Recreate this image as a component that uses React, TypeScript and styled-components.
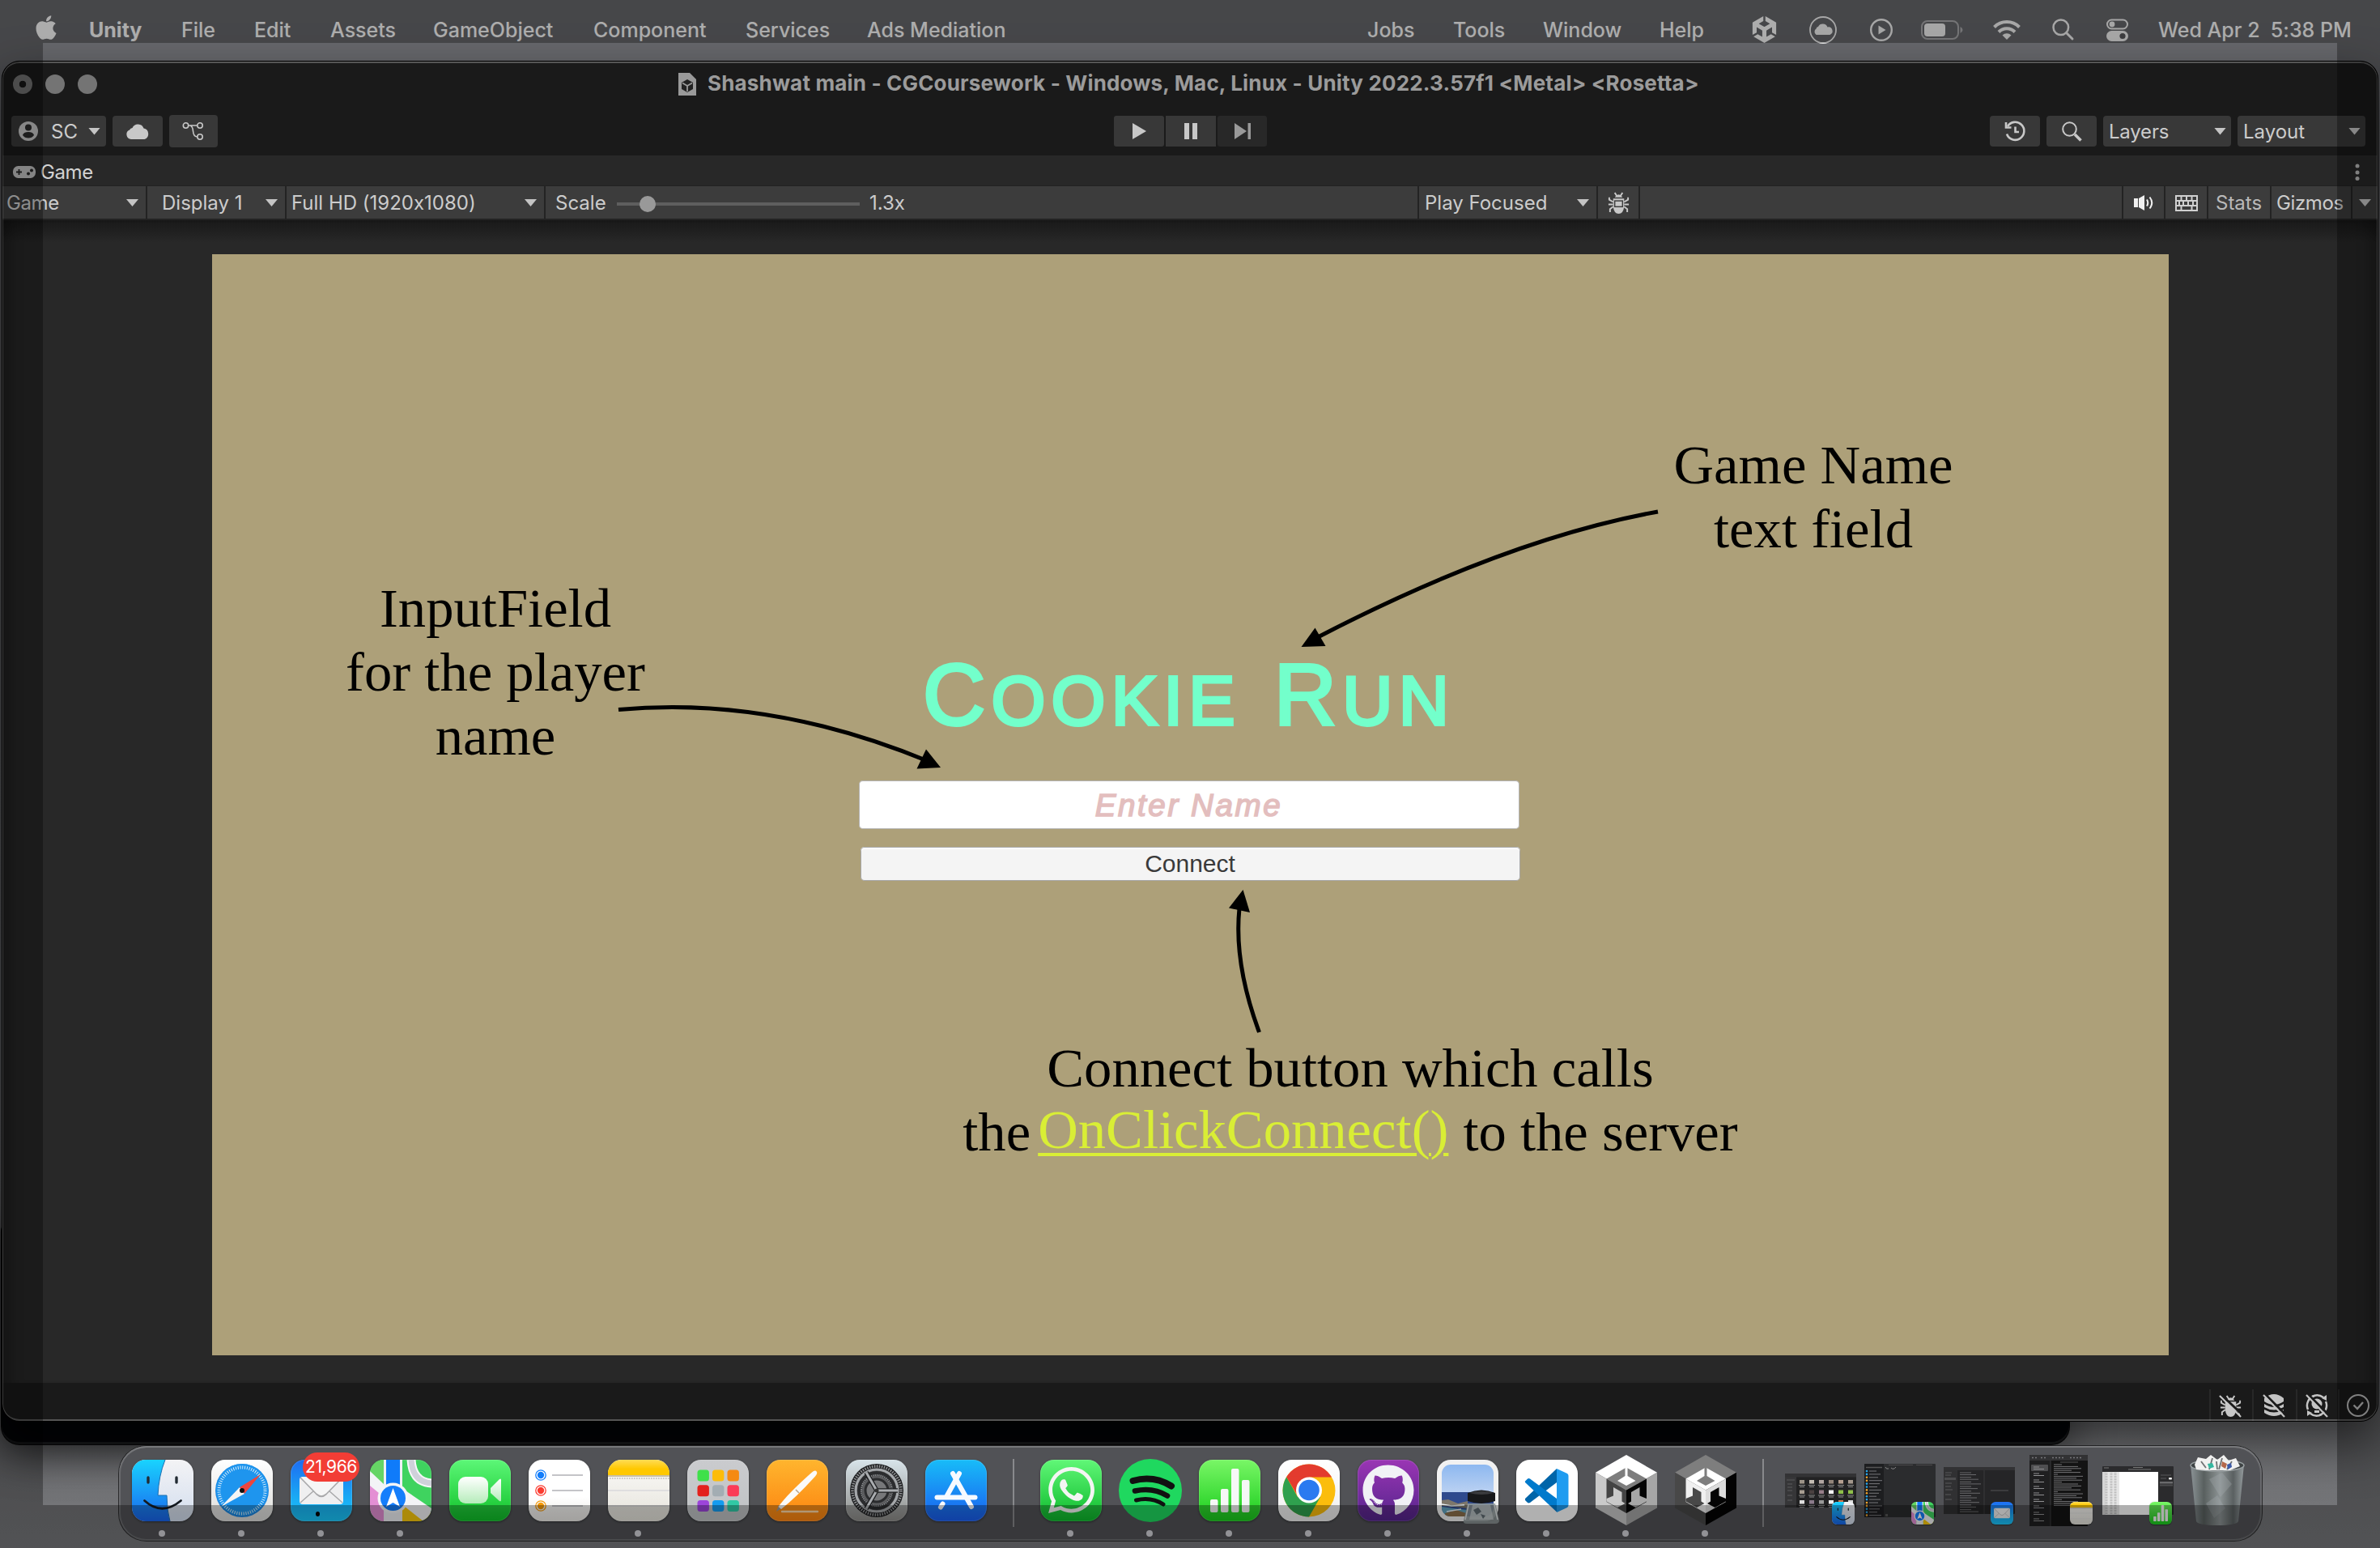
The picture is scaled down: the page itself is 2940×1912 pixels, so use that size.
import React from "react";
import styled, { createGlobalStyle, css } from "styled-components";
import { FaApple, FaGithub, FaWhatsapp } from "react-icons/fa";
import { SiUnity } from "react-icons/si";

const GlobalStyle = createGlobalStyle`
  * { box-sizing: border-box; }
  body { margin: 0; background: #737478; }
  svg { display: block; flex: none; overflow: visible; }
`;

/* ---------- desktop ---------- */

const Desktop = styled.main`
  position: relative;
  width: 2940px;
  height: 1912px;
  overflow: hidden;
  display: flex;
  flex-direction: column;
  background: linear-gradient(#66676b 0 75px, #6a6b6e 1700px, #77787b 1912px);
  font-family: Inter, "Liberation Sans", sans-serif;
  font-feature-settings: "calt" 0;
`;

const DimFrame = styled.div`
  position: absolute;
  left: 53px;
  top: 53px;
  width: 2834px;
  height: 1806px;
  box-shadow: 0 0 0 200px rgba(0, 0, 0, 0.31);
  pointer-events: none;
  z-index: 5;
`;

/* ---------- menu bar ---------- */

const MenuBar = styled.nav`
  height: 75px;
  flex: none;
  display: flex;
  align-items: flex-start;
  color: #fbfbfb;
`;

const MenuItem = styled.span<{ $ml: number; $w: number; $bold?: boolean; $ls?: number }>`
  margin-left: ${(p) => p.$ml}px;
  width: ${(p) => p.$w}px;
  height: 73px;
  flex: none;
  display: flex;
  align-items: center;
  white-space: pre;
  font-size: 25px;
  font-weight: ${(p) => (p.$bold ? 700 : 500)};
  letter-spacing: ${(p) => p.$ls ?? 0}px;
`;

/* ---------- windows ---------- */

const BackWindow = styled.div`
  position: absolute;
  left: 2px;
  top: 1500px;
  width: 2554px;
  height: 284px;
  border-radius: 22px;
  background: #030407;
  box-shadow: inset 0 -3px 0 #17181a, 0 0 0 1px #060606, 0 12px 50px rgba(0, 0, 0, 0.5);
`;

const Window = styled.section`
  position: relative;
  margin: 0 2px;
  height: 1681px;
  flex: none;
  display: flex;
  flex-direction: column;
  border-radius: 22px;
  overflow: hidden;
  border: 1px solid #000;
  background: #1a1a1a;
  box-shadow: 0 26px 60px rgba(0, 0, 0, 0.55);
  &::after {
    content: "";
    position: absolute;
    inset: 0;
    border-radius: 21px;
    border: 2px solid rgba(255, 255, 255, 0.26);
    border-left-width: 1px;
    border-right-width: 1px;
  }
`;

const TitleBar = styled.header`
  height: 56px;
  flex: none;
  display: flex;
  align-items: center;
  padding-left: 13px;
`;

const Light = styled.i<{ $dot?: boolean }>`
  width: 24px;
  height: 24px;
  margin-right: 16px;
  border-radius: 50%;
  background: ${(p) =>
    p.$dot ? "radial-gradient(circle, #161616 0 4px, #6f6f6f 4.6px)" : "#747474"};
`;

const WindowTitle = styled.h1`
  margin: 0 0 3px 13px;
  width: 1250px;
  font-size: 26px;
  font-weight: 700;
  color: #9b9b9b;
  white-space: nowrap;
  letter-spacing: 0.17px;
`;

const MainBar = styled.div`
  height: 60px;
  flex: none;
  display: flex;
  align-items: center;
  padding: 0 15px 0 11px;
`;

const BarButton = styled.button<{ $w: number; $ml?: number; $h?: number; $off?: boolean; $first?: boolean; $r?: number }>`
  margin: 0 0 0 ${(p) => p.$ml ?? 0}px;
  width: ${(p) => p.$w}px;
  height: ${(p) => p.$h ?? 38}px;
  flex: none;
  display: flex;
  align-items: center;
  justify-content: center;
  padding: 0;
  border: 0;
  border-radius: ${(p) => p.$r ?? 4}px;
  background: ${(p) => (p.$off ? "#282828" : "#383838")};
  color: #c8c8c8;
  font: 400 24px Inter, sans-serif;
  text-align: left;
  ${(p) =>
    p.$first &&
    css`
      justify-content: flex-start;
      padding: 0 7px;
    `}
`;

const Label = styled.span<{ $w?: number; $ls?: number; $color?: string }>`
  width: ${(p) => (p.$w ? `${p.$w}px` : "auto")};
  flex: none;
  white-space: nowrap;
  font-size: 24px;
  letter-spacing: ${(p) => p.$ls ?? 0}px;
  color: ${(p) => p.$color ?? "#cccccc"};
`;

const Caret = styled.i`
  width: 15px;
  height: 9px;
  flex: none;
  background: #c4c4c4;
  clip-path: polygon(0 0, 100% 0, 50% 100%);
`;

const Spacer = styled.div`
  flex: 1;
`;

const TabBar = styled.div`
  height: 38px;
  flex: none;
  display: flex;
  align-items: center;
  padding: 4px 22px 0 13px;
  background: #282828;
  border-bottom: 1px solid #222;
`;

const GameBar = styled.div`
  height: 42px;
  flex: none;
  display: flex;
  background: #3c3c3c;
  border-bottom: 2px solid #232323;
`;

const Cell = styled.div<{ $w: number; $pl?: number; $pr?: number; $center?: boolean; $open?: boolean }>`
  width: ${(p) => p.$w}px;
  height: 100%;
  flex: none;
  display: flex;
  align-items: center;
  justify-content: ${(p) => (p.$center ? "center" : "space-between")};
  padding: 1px ${(p) => p.$pr ?? 0}px 0 ${(p) => p.$pl ?? 0}px;
  border-right: ${(p) => (p.$open ? "0" : "2px solid #232323")};
`;

const Slider = styled.div`
  width: 300px;
  height: 4px;
  margin: 2px 12px 0 13px;
  background: #5e5e5e;
  display: flex;
  align-items: center;
  padding-left: 28px;
`;

const Knob = styled.i`
  width: 20px;
  height: 20px;
  border-radius: 50%;
  background: #999;
`;

const Stage = styled.div`
  height: 1436px;
  flex: none;
  padding: 42px 0 0 259px;
  background: linear-gradient(#191919, #282828 28px);
  box-shadow: inset 24px 0 16px -14px rgba(0, 0, 0, 0.25), inset -24px 0 16px -14px rgba(0, 0, 0, 0.25);
`;

const StatusBar = styled.footer`
  flex: 1;
  display: flex;
  justify-content: flex-end;
  background: #1a1a1a;
`;

const StatusCell = styled.div<{ $w: number }>`
  width: ${(p) => p.$w}px;
  display: flex;
  align-items: center;
  justify-content: center;
  padding-top: 9px;
  background: linear-gradient(#282828, #282828) left 8px / 2px 100% no-repeat;
  background-position: left 0 top 8px;
  color: #c4c4c4;
`;

/* ---------- game view ---------- */

const GameView = styled.div`
  position: relative;
  width: 2417px;
  height: 1360px;
  background: #ada079;
  display: flex;
  flex-direction: column;
  align-items: center;
  padding-top: 482px;
`;

const GameTitle = styled.h2`
  margin: 0 4px 0 0;
  height: 168px;
  line-height: 128px;
  font-family: "Liberation Sans", Arial, sans-serif;
  font-weight: 400;
  font-size: 107px;
  letter-spacing: 7.2px;
  word-spacing: 4px;
  color: #73ffcb;
  -webkit-text-stroke: 3.8px #73ffcb;
  white-space: pre;
  transform: translateY(-2px);
  small {
    font-size: 86px;
  }
`;

const NameInput = styled.div`
  width: 816px;
  height: 60px;
  margin-right: 4px;
  flex: none;
  display: flex;
  align-items: center;
  justify-content: center;
  padding-top: 1px;
  border-radius: 5px;
  background: #fff;
  box-shadow: inset 0 0 0 1px rgba(90, 90, 90, 0.45);
  font: italic 400 38.5px "Liberation Sans", Arial, sans-serif;
  letter-spacing: 2.6px;
  color: #e3bebe;
  -webkit-text-stroke: 1.6px #e3bebe;
`;

const ConnectButton = styled.button`
  width: 815px;
  height: 42px;
  margin: 22px 1px 0 0;
  padding: 0;
  flex: none;
  border: 0;
  border-radius: 5px;
  background: #f4f4f4;
  box-shadow: inset 0 0 0 1px rgba(90, 90, 90, 0.5), inset 0 3px 0 #fff;
  font: 400 30px "Liberation Sans", Arial, sans-serif;
  color: #3a3a3a;
`;

const Note = styled.div<{ $x: number; $y: number; $w: number }>`
  position: absolute;
  left: ${(p) => p.$x}px;
  top: ${(p) => p.$y}px;
  width: ${(p) => p.$w}px;
  text-align: center;
  white-space: pre;
  font: 400 68.67px/79.2px "Liberation Serif", "Times New Roman", serif;
  color: #000;
`;

const NoteLine = styled.div`
  display: flex;
  justify-content: center;
`;

const Call = styled.u`
  margin: -3px 18px 0 9px;
  color: #d9ee35;
  text-decoration-thickness: 4px;
  text-underline-offset: 6px;
`;

const Arrows = styled.svg`
  position: absolute;
  left: -262px;
  top: -314px;
  pointer-events: none;
`;

/* ---------- dock ---------- */

const DockBar = styled.div`
  position: relative;
  align-self: center;
  margin: 30px 0 0 1px;
  width: 2647px;
  height: 117px;
  flex: none;
  display: flex;
  padding: 0 5px;
  border-radius: 34px;
  background: #515256;
  box-shadow: inset 0 2px 0 #77787b, inset 0 0 0 2px rgba(255, 255, 255, 0.14), 0 0 0 1px rgba(20, 20, 22, 0.75);
`;

const Slot = styled.div<{ $running?: boolean }>`
  position: relative;
  width: 98px;
  height: 117px;
  flex: none;
  display: flex;
  justify-content: center;
  padding-top: 17px;
  ${(p) =>
    p.$running &&
    css`
      &::after {
        content: "";
        position: absolute;
        left: 44px;
        top: 104px;
        width: 8px;
        height: 8px;
        border-radius: 50%;
        background: #d4d4da;
      }
    `}
`;

const Tile = styled.div<{ $bg: string }>`
  width: 76px;
  height: 76px;
  border-radius: 17px;
  overflow: hidden;
  background: ${(p) => p.$bg};
  box-shadow: 0 1px 3px rgba(0, 0, 0, 0.4), inset 0 0 0 1px rgba(255, 255, 255, 0.12);
`;

const Mini = styled.div`
  position: absolute;
  right: 7px;
  top: 69px;
  width: 28px;
  height: 28px;
  > div {
    transform: scale(0.3684);
    transform-origin: 0 0;
  }
`;

const Badge = styled.span`
  position: absolute;
  left: 26px;
  top: 8px;
  width: 70px;
  height: 36px;
  border-radius: 18px;
  background: #f23d35;
  color: #fff;
  font: 400 21px/36px Inter, sans-serif;
  letter-spacing: -0.4px;
  text-align: center;
`;

const Divider = styled.div`
  width: 2px;
  height: 84px;
  margin: 16px 21px 0;
  flex: none;
  background: #88898c;
`;

/* ---------- dock icons ---------- */

const Art = ({ children, w = 76, h = 76 }: { children: React.ReactNode; w?: number; h?: number }) => (
  <svg width={w} height={h} viewBox={`0 0 ${w} ${h}`}>
    {children}
  </svg>
);

const Finder = () => (
  <Tile $bg="linear-gradient(#f3f3f5, #d3deef)">
    <Art>
      <defs>
        <linearGradient id="fin" x1="0" y1="0" x2="0" y2="1">
          <stop offset="0" stopColor="#19d3fe" />
          <stop offset="1" stopColor="#1a66ee" />
        </linearGradient>
      </defs>
      <path d="M0 0H41Q33 20 32 44H43Q43 62 47 76H0Z" fill="url(#fin)" />
      <path d="M41 0Q33 20 32 44H43Q43 62 47 76" fill="none" stroke="#1b6fb0" strokeWidth="1" />
      <path d="M20 22v6M55 22v6" stroke="#222b33" strokeWidth="3.4" strokeLinecap="round" />
      <path d="M15.500 50.500Q37 70 60.500 50.500" fill="none" stroke="#151b22" strokeWidth="2.800" strokeLinecap="round" />
    </Art>
  </Tile>
);

const Safari = () => (
  <Tile $bg="linear-gradient(#fff, #dcdcda)">
    <Art>
      <circle cx="38" cy="38" r="33" fill="#1c86e0" />
      <circle cx="38" cy="37" r="32" fill="#1e95ee" />
      <circle cx="38" cy="38" r="28.500" fill="none" stroke="#d9eefb" strokeWidth="4" strokeDasharray="1 1.800" />
      <path d="M12 58L35 34L41 42Z" fill="#f4f4f4" />
      <path d="M61 18L35 34L41 42Z" fill="#ee453d" />
      <circle cx="38" cy="38" r="3" fill="#111" />
    </Art>
  </Tile>
);

const Mail = () => (
  <Tile $bg="linear-gradient(#1d6cf2, #1aa9f4 60%, #1ac8fc)">
    <Art>
      <rect x="11" y="21" width="54" height="34" rx="4" fill="#efeff0" />
      <path d="M12 53L29 38M64 53L47 38" stroke="#a9a9ab" strokeWidth="1.500" />
      <path d="M12 22L32 42.500Q38 48 44 42.500L64 22" fill="#f6f6f6" stroke="#a9a9ab" strokeWidth="1.700" />
    </Art>
  </Tile>
);

const MailPoint = styled.i`
  position: absolute;
  left: 42px;
  top: 81px;
  width: 5px;
  height: 6px;
  border-radius: 50%;
  background: #050505;
`;

const Maps = () => (
  <Tile $bg="#3fd35f">
    <Art>
      <path d="M0 0H17V30L0 20Z" fill="#66d565" />
      <path d="M0 14L17 30V60H0Z" fill="#f3f3f6" />
      <path d="M0 32L17 46V76H0Z" fill="#e48fd4" />
      <path d="M40 76V44L76 66V76Z" fill="#f9c80e" />
      <path d="M38 34L76 60V76H66L38 54Z" fill="#f3f3f6" />
      <path d="M17 0H40V76H17Z" fill="#eef0f4" />
      <path d="M20 0H37V44H20Z" fill="#0f7bfa" />
      <path d="M51 0C52 18 60 28 76 29" fill="none" stroke="#f6f6f8" strokeWidth="11" />
      <path d="M51 0C52 18 60 28 76 29" fill="none" stroke="#cfd1da" strokeWidth="7" />
      <circle cx="28.500" cy="47.500" r="19" fill="#f4f5f8" />
      <circle cx="28.500" cy="47.500" r="15.500" fill="#157efb" />
      <path d="M28.500 35L37 58L28.500 53L20 58Z" fill="#fff" />
    </Art>
  </Tile>
);

const FaceTime = () => (
  <Tile $bg="linear-gradient(#5cf777, #0fbf28)">
    <Art>
      <defs>
        <linearGradient id="ft" x1="0" y1="0" x2="0" y2="1">
          <stop offset="0" stopColor="#fff" />
          <stop offset="1" stopColor="#b5ecba" />
        </linearGradient>
      </defs>
      <rect x="11" y="21" width="37" height="33" rx="9" fill="url(#ft)" />
      <path d="M51 35L62 24Q64 22.500 64 25V50Q64 52 62 51L51 41Z" fill="url(#ft)" />
    </Art>
  </Tile>
);

const Reminders = () => (
  <Tile $bg="linear-gradient(#fff, #fff 60%, #eceae6)">
    <Art>
      {["#147efb", "#fb3b30", "#f59a0b"].map((c, i) => (
        <g key={c}>
          <circle cx="15" cy={19 + i * 19} r="6.200" fill="none" stroke={c} strokeWidth="1.300" />
          <circle cx="15" cy={19 + i * 19} r="4.200" fill={c} />
          <path d={`M29 ${19 + i * 19}H67`} stroke="#c4c4c8" strokeWidth="1.800" />
        </g>
      ))}
    </Art>
  </Tile>
);

const Notes = () => (
  <Tile $bg="linear-gradient(#fbfaf8, #e6e4dc)">
    <Art>
      <defs>
        <linearGradient id="nt" x1="0" y1="0" x2="0" y2="1">
          <stop offset="0" stopColor="#ffdc55" />
          <stop offset="0.600" stopColor="#ffc800" />
        </linearGradient>
      </defs>
      <rect width="76" height="19" fill="url(#nt)" />
      <path d="M0 20H76" stroke="#b9ae8c" strokeWidth="1.500" />
      <path d="M2 23H76" stroke="#c9c8c4" strokeWidth="1.800" strokeDasharray="1.600 1.400" />
      <path d="M0 38H76M0 57H76" stroke="#d9d9dc" strokeWidth="1.600" />
    </Art>
  </Tile>
);

const padColours = ["#3fe04a", "#fcbc0b", "#f58a12", "#e3211d", "#a3adb3", "#fb3b57", "#9c45da", "#139cf0", "#31c9a5"];

const Launchpad = () => (
  <Tile $bg="linear-gradient(#cacbce, #bfc2c4)">
    <Art>
      {padColours.map((c, i) => (
        <rect key={c} x={12.500 + (i % 3) * 18.500} y={12.500 + Math.floor(i / 3) * 18.700} width="14.400" height="14" rx="3.500" fill={c} />
      ))}
    </Art>
  </Tile>
);

const Pages = () => (
  <Tile $bg="linear-gradient(#ffb52e, #fc8410)">
    <Art>
      <path d="M19 64H63" stroke="#ffd9a8" strokeWidth="2.400" strokeLinecap="round" />
      <path d="M12 64L15 56L18.500 60Z" fill="#9a9a9a" />
      <path d="M14.500 58Q26 42 56 15.500Q60 12 62 15Q63 17 60 20.500Q36 47 18 61Z" fill="#fbfaf8" />
      <path d="M36 37L40 41" stroke="#b9a58d" strokeWidth="1.600" />
    </Art>
  </Tile>
);

const Settings = () => (
  <Tile $bg="linear-gradient(#d8e4ea, #8d8c89)">
    <Art>
      <circle cx="38" cy="38" r="33" fill="#1d1e20" />
      <circle cx="38" cy="38" r="30" fill="none" stroke="#8f9193" strokeWidth="3.500" strokeDasharray="1.500 1.500" />
      <circle cx="38" cy="38" r="26" fill="#5c5d5f" stroke="#a4a7aa" strokeWidth="3.200" />
      <circle cx="38" cy="38" r="21" fill="none" stroke="#2b2c2e" strokeWidth="6" />
      <circle cx="38" cy="38" r="19" fill="none" stroke="#8b8d90" strokeWidth="2" strokeDasharray="1.400 1" />
      <circle cx="38" cy="38" r="14" fill="#77787a" stroke="#2b2c2e" strokeWidth="3" />
      <path d="M38 38H64M38 38L25 15.500M38 38L25 60.500" stroke="#1f2022" strokeWidth="5.500" />
      <path d="M38 38H64M38 38L25 15.500M38 38L25 60.500" stroke="#a9acaf" strokeWidth="3" />
      <circle cx="38" cy="38" r="2.500" fill="#333" />
    </Art>
  </Tile>
);

const AppStore = () => (
  <Tile $bg="linear-gradient(#18bcf8, #1a5df0)">
    <Art>
      <g stroke="#f7faff" strokeWidth="6" strokeLinecap="round">
        <path d="M14.500 46.500H61.500" />
        <path d="M42 17L27 44M21.500 54.500L19 58.500" />
        <path d="M34 17L57 58" />
      </g>
    </Art>
  </Tile>
);

const WhatsApp = () => (
  <Tile $bg="linear-gradient(#60f777, #0cb92b)">
    <Art>
      <g transform="translate(6 5)">
        <FaWhatsapp size={65} color="#f3f5f3" />
      </g>
    </Art>
  </Tile>
);

const Spotify = () => (
  <Art>
    <circle cx="38" cy="38" r="39" fill="#1fd85f" />
    <g fill="none" stroke="#111" strokeLinecap="round">
      <path d="M16.500 26Q42 19 64 32.500" strokeWidth="8" />
      <path d="M19 38.500Q41 33.500 59 44.500" strokeWidth="6.600" />
      <path d="M20.500 50Q39 45.500 54 55" strokeWidth="5" />
    </g>
  </Art>
);

const Numbers = () => (
  <Tile $bg="linear-gradient(#79f666, #19cc1c)">
    <Art>
      <g fill="#f6f8f7">
        <rect x="14" y="49" width="9.500" height="16" rx="2" />
        <rect x="27" y="36" width="9.500" height="29" rx="2" />
        <rect x="40" y="11" width="9.500" height="54" rx="2" />
        <rect x="53" y="25" width="9.500" height="40" rx="2" />
      </g>
    </Art>
  </Tile>
);

const Chrome = () => (
  <Tile $bg="linear-gradient(#fff, #efefef)">
    <Art>
      <circle cx="38" cy="38" r="32.500" fill="#fbbd0c" />
      <path d="M10.200 21.200A32.500 32.500 0 0 0 38 70.500L52 46L38 38L24 46Z" fill="#2fa04e" />
      <path d="M38 38L10.200 21.200A32.500 32.500 0 0 1 66 21.500H38Z" fill="#e33b2e" />
      <path d="M10.200 21.200L23.700 44L38 30V20Z" fill="#e33b2e" />
      <circle cx="38" cy="37.500" r="16" fill="#fff" />
      <circle cx="38" cy="37.500" r="12.800" fill="#2a7af0" />
    </Art>
  </Tile>
);

const GitHub = () => (
  <Tile $bg="linear-gradient(#9a35b4, #55258c)">
    <Art>
      <g transform="translate(5.500 5.500)">
        <FaGithub size={65} color="#f1f1f6" />
      </g>
    </Art>
  </Tile>
);

const PreviewTile = styled(Tile)`
  overflow: visible;
`;

const Preview = () => (
  <PreviewTile $bg="#f1f1f1">
    <Art>
      <defs>
        <clipPath id="pv">
          <rect x="6" y="6" width="64" height="64" rx="11" />
        </clipPath>
        <linearGradient id="sky" x1="0" y1="0" x2="0" y2="1">
          <stop offset="0" stopColor="#8db8f0" />
          <stop offset="1" stopColor="#bcd2f2" />
        </linearGradient>
      </defs>
      <g clipPath="url(#pv)">
        <rect x="6" y="6" width="64" height="36" fill="url(#sky)" />
        <rect x="6" y="40" width="64" height="30" fill="#2f4a8d" />
        <path d="M6 50L14 49L26 54L38 51V60L22 58L6 57Z" fill="#7d776b" />
        <path d="M6 58L20 60L38 62V70H6Z" fill="#62a3bd" />
        <path d="M10 66L24 62L36 66V70H10Z" fill="#8c6f4b" />
        <path d="M6 55L18 57L34 56M12 64L30 61" stroke="#e9f0f3" strokeWidth="1.500" fill="none" />
      </g>
      <path d="M38 54H72L77 75Q77 79 72 79H37Q32 79 33 75Z" fill="#8f989a" opacity="0.880" />
      <path d="M44 56L40 74H70L66 56Z" fill="#c9d0d2" opacity="0.700" />
      <path d="M39 56L35 74M71 56L75 74" stroke="#dfe4e5" strokeWidth="1.500" />
      <path d="M45 62l6 -3l4 5l-6 4zM54 67l6 2l-3 4z" fill="#5f6b72" />
      <path d="M38 41Q55 34 72 41V51Q55 57 38 51Z" fill="#17181a" />
      <path d="M40 41Q55 36.500 70 41Q55 45 40 41Z" fill="#3a3b3e" />
    </Art>
  </PreviewTile>
);

const VSCode = () => (
  <Tile $bg="#fff">
    <Art>
      <path d="M11 48L50 11V28L17 53Q15 54 13.500 52.500L11 50Z" fill="#0065a9" />
      <path d="M11 28L50 64.500V48L17 23.500Q15 22.500 13.500 24L11 26.500Z" fill="#007acc" />
      <path d="M50 11L63 17Q64.500 18 64.500 20V56Q64.500 58 63 59L50 65Z" fill="#1f9cf0" />
    </Art>
  </Tile>
);

interface CubeTone {
  top: string;
  left: string;
  right: string;
  inTop: string;
  inLeft: string;
  inRight: string;
  cut: string;
  cutLeft: string;
  cutRight: string;
}

const TallArt = styled.svg`
  margin-top: -6px;
`;

const Cube = ({ t }: { t: CubeTone }) => (
  <TallArt width="76" height="87" viewBox="0 0 76 87">
    <path d="M38 0L76 21.700L38 43.500L0 21.700Z" fill={t.top} />
    <path d="M0 21.700L38 43.500V87L0 65.500Z" fill={t.left} />
    <path d="M76 21.700L38 43.500V87L76 65.500Z" fill={t.right} />
    <path d="M38 15.500L63 29.500L38 43.500L13.500 29.500Z" fill={t.inTop} />
    <path d="M13.500 29.500L38 43.500V72L13.500 58Z" fill={t.inLeft} />
    <path d="M63 29.500L38 43.500V72L63 58Z" fill={t.inRight} />
    <path d="M36.500 13H39.500V26L49.500 32L38 38L27 32L36.500 26Z" fill={t.cut} />
    <path d="M22 40L32.500 46V57.500L36.500 60L27 65L13.500 57.500V54L22 50.500Z" fill={t.cutLeft} />
    <path d="M54.500 40L44 46V57.500L40 60L49.500 65L63 57.500V54L54.500 50.500Z" fill={t.cutRight} />
  </TallArt>
);

const lightCube: CubeTone = {
  top: "#ffffff", left: "#c9c9c9", right: "#a6a6a6",
  inTop: "#7d7d7d", inLeft: "#444444", inRight: "#050505",
  cut: "#ffffff", cutLeft: "#c9c9c9", cutRight: "#a6a6a6",
};
const darkCube: CubeTone = {
  top: "#7e7e7e", left: "#484848", right: "#030303",
  inTop: "#ffffff", inLeft: "#f0f0f0", inRight: "#dcdcdc",
  cut: "#7e7e7e", cutLeft: "#484848", cutRight: "#050505",
};

const Trash = () => (
  <TallArt width="68" height="88" viewBox="0 0 68 88">
    <defs>
      <linearGradient id="bin" x1="0" y1="0" x2="1" y2="0">
        <stop offset="0" stopColor="#8b9396" />
        <stop offset="0.250" stopColor="#59605f" />
        <stop offset="0.550" stopColor="#8d9495" />
        <stop offset="0.800" stopColor="#5a6061" />
        <stop offset="1" stopColor="#949b9d" />
      </linearGradient>
    </defs>
    <path d="M1 12Q34 24 67 12L60 82Q58 87 34 87Q10 87 8 82Z" fill="url(#bin)" />
    <path d="M24 30L40 22L52 36L38 52Z M20 60L34 50L44 66L30 78Z" fill="#aab1b3" opacity="0.300" />
    <ellipse cx="34" cy="13" rx="33" ry="7" fill="#3e4344" stroke="#9aa1a3" strokeWidth="1.500" />
    <path d="M6 12L10 3L20 5L26 0L34 6L42 0L48 7L57 4L62 14L50 19H20L8 18Z" fill="#f1f1f0" />
    <path d="M14 8L20 16M28 4L24 18M33 8L34 18M40 4L36 18M52 8L46 18" stroke="#6f7274" strokeWidth="1.800" />
    <path d="M22 11l6 -1l2 5l-6 2z" fill="#35b7a0" />
    <path d="M40 8l6 3l-2 6l-5 -3z" fill="#b4674a" />
    <path d="M46 12l5 -2l1 5l-5 3z" fill="#3c5aa6" />
  </TallArt>
);

/* Minimised window previews */
const range = (n: number) => Array.from({ length: n }, (_, i) => i);

const Thumb = styled.div<{ $w: number; $h: number; $top: number; $bg?: string }>`
  width: ${(p) => p.$w}px;
  height: ${(p) => p.$h}px;
  margin-top: ${(p) => p.$top - 17}px;
  background: ${(p) => p.$bg ?? "#29292b"};
  border-radius: 1px;
  overflow: hidden;
`;

const FinderThumb = () => (
  <Thumb $w={88} $h={42} $top={34} $bg="#222223">
    <Art w={88} h={42}>
      <rect width="14" height="42" fill="#363638" />
      <rect width="88" height="4.500" fill="#333335" />
      <path d="M2 8H12M3 13H9M3 17H9M3 21H9M3 27H9M3 33H9" stroke="#5a5a5c" />
      {range(18).map((i) => {
        const c = ["#9d9488", "#c5beb4", "#b2a7a2", "#93857a", "#b59f90", "#a3978c", "#a89e92", "#4a4140", "#977f8a", "#f4f4f4", "#8fbf4a", "#8fbf4a", "#ddd", "#8b7b8b", "#999", "#eee", "#d87c50", "#e0e0e0"][i];
        const x = 18 + (i % 6) * 12;
        const y = 8 + Math.floor(i / 6) * 12.500;
        return (
          <g key={i}>
            <rect x={x} y={y} width="6" height="4.500" fill={c} />
            <path d={`M${x - 1} ${y + 6.500}h8M${x} ${y + 8.500}h6`} stroke="#8a8a8a" strokeWidth="1" />
          </g>
        );
      })}
    </Art>
  </Thumb>
);

const MapsThumb = () => (
  <Thumb $w={88} $h={66} $top={22} $bg="#2b2c2e">
    <Art w={88} h={66}>
      <rect width="24" height="66" fill="#1d1e20" />
      <path d="M2 4.500H22" stroke="#555" strokeWidth="1.500" />
      <path d="M30 1.500H60M64 1.500H84" stroke="#4b4b4d" />
      {range(15).map((i) => (
        <g key={i}>
          <circle cx="3" cy={9 + i * 3.900} r="1.300" fill={["#29a6e8", "#e33c36", "#f1a52c", "#ddd"][(i * 3 + (i % 2)) % 4]} />
          <path d={`M6 ${9 + i * 3.900}h${9 + ((i * 5) % 8)}`} stroke="#77777a" strokeWidth="1" />
        </g>
      ))}
      <path d="M26 4q1 3 4 2M33 5q3 3 6 -1" stroke="#888" fill="none" />
      <rect x="26" y="62" width="3" height="3" fill="#555" />
    </Art>
  </Thumb>
);

const MailThumb = () => (
  <Thumb $w={88} $h={58} $top={26} $bg="#252527">
    <Art w={88} h={58}>
      <rect width="17" height="58" fill="#303032" />
      <rect width="88" height="4" fill="#323234" />
      <path d="M50 4V58" stroke="#3b3b3d" />
      <rect x="1" y="13" width="14" height="3" fill="#4c4c4e" />
      <path d="M2 7H10M2 10H9M2 20H10M2 24H9M2 28H11M2 34H9M2 40H10" stroke="#59595b" />
      {range(9).map((i) => (
        <path key={i} d={`M20 ${7 + i * 5.700}h14M20 ${9.500 + i * 5.700}h${20 + ((i * 3) % 7)}`} stroke="#68686b" strokeWidth="1" />
      ))}
      <path d="M58 29H80" stroke="#454547" strokeWidth="1.500" />
    </Art>
  </Thumb>
);

const NotesThumb = () => (
  <Thumb $w={72} $h={88} $top={11} $bg="#141414">
    <Art w={72} h={88}>
      <rect width="72" height="7" fill="#323234" />
      <rect y="7" width="26" height="81" fill="#1f1f20" />
      <path d="M26 7V88" stroke="#3a3a3c" />
      <path d="M3 3.500H10M14 3.500H22M28 3.500H44M50 3.500H66" stroke="#77777a" strokeWidth="1.500" strokeDasharray="2 2" />
      <rect x="2" y="12" width="21" height="8" rx="1" fill="#4e4e50" />
      {range(9).map((i) => (
        <path key={i} d={`M5 ${15 + i * 8}h7M5 ${17.500 + i * 8}h13`} stroke="#8f8f91" strokeWidth="1.100" />
      ))}
      {range(22).map((i) => (
        <path key={i} d={`M30 ${12 + i * 2.400}h${[10, 30, 34, 22, 33, 5, 36, 28, 35][i % 9]}`} stroke="#737375" strokeWidth="1" />
      ))}
      <path d="M38 9H60" stroke="#555" />
    </Art>
  </Thumb>
);

const SheetThumb = () => (
  <Thumb $w={88} $h={60} $top={25} $bg="#2b2b2d">
    <Art w={88} h={60}>
      <rect y="7" width="69" height="53" fill="#fff" />
      <rect y="7" width="4" height="53" fill="#d5d5d5" />
      <rect x="4" y="7" width="17" height="53" fill="#e6e6e6" />
      <path d="M5 8V60M11 8V60M16 8V60" stroke="#b4b4b4" strokeWidth="3" strokeDasharray="1 1" />
      <path d="M2 2H8M38 1.500H50M32 4H60" stroke="#777" />
      <path d="M72 11H85M72 15H79" stroke="#5b5b5d" strokeWidth="1.200" />
      <rect x="71" y="19" width="16" height="2.500" fill="#6a6a6c" />
      <rect x="71" y="22.500" width="16" height="2" fill="#4c4c4e" />
      <rect x="82" y="14" width="4" height="2.500" rx="1" fill="#eee" />
    </Art>
  </Thumb>
);

/* ---------- small interface icons ---------- */

const Beetle = ({ slash, size = 30 }: { slash?: boolean; size?: number }) => (
  <svg width={size} height={size} viewBox="0 0 30 30" fill="none" stroke="#c8c8c8" strokeWidth="2">
    <path d="M10 2L12.500 6M20 2L17.500 6M3 8V11L8 14M27 8V11L22 14M2 17H8M28 17H22M4 27V23L8 20M26 27V23L22 20" />
    <path d="M10 8Q15 1 20 8Z" fill="#c8c8c8" stroke="none" />
    <path d="M8 9.500H22V20Q21 29 15 29Q9 29 8 20Z" fill="#c8c8c8" stroke="none" />
    {!slash && <rect x="10" y="12.500" width="10" height="7.500" stroke="#3c3c3c" strokeWidth="1.500" />}
    {slash && <path d="M1 -1L31 27" stroke="#1a1a1a" strokeWidth="3" />}
    {slash && <path d="M1 2L28 29" stroke="#c8c8c8" strokeWidth="2.200" />}
  </svg>
);

const DatabaseOff = () => (
  <svg width="28" height="28" viewBox="0 0 28 28">
    <path d="M2 5Q14 -5 26 5V9Q14 17 2 9Z" fill="#c4c4c4" />
    <path d="M2 12Q14 20 26 12V16Q14 23 2 16ZM2 19Q14 26 26 19V23Q14 31 2 23Z" fill="#c4c4c4" />
    <path d="M2 -1L29 26" stroke="#1a1a1a" strokeWidth="3" />
    <path d="M1 1L27 28" stroke="#c4c4c4" strokeWidth="2.200" />
  </svg>
);

const AutoOff = () => (
  <svg width="28" height="28" viewBox="0 0 28 28" fill="none" stroke="#c4c4c4" strokeWidth="2.500">
    <path d="M11 2A12.500 12.500 0 0 0 3 19M17 26A12.500 12.500 0 0 0 25 9" />
    <path d="M8 3A13 13 0 0 1 22 4M20 25A13 13 0 0 1 6 24" />
    <path d="M26 1V8L20 5ZM2 27V20L8 23Z" fill="#c4c4c4" stroke="none" />
    <circle cx="14" cy="12" r="6.500" fill="#c4c4c4" stroke="none" />
    <path d="M11 20H17V23H11Z" fill="#c4c4c4" stroke="none" />
    <path d="M2 -1L29 26" stroke="#1a1a1a" strokeWidth="3" />
    <path d="M1 1L27 28" strokeWidth="2.200" />
  </svg>
);

const CloudShape = ({ w, color }: { w: number; color: string }) => (
  <svg width={w} height={w * 0.72} viewBox="0 0 28 20" fill={color}>
    <path d="M6 20A6 6 0 0 1 4 8.500A5 5 0 0 1 7.500 6A7.500 7.500 0 0 1 21.500 6.500A7 7 0 0 1 22.500 20Z" />
  </svg>
);

const AppleMark = styled(FaApple)`
  margin: -5px 0 0 -1px;
`;

const ProjectIcon = styled.svg`
  margin-left: 701px;
`;

const AccountIcon = styled.svg`
  margin: 0 16px 0 2px;
`;

const leftMenus: [string, number, number][] = [
  ["File", 46, 41],
  ["Edit", 49, 46],
  ["Assets", 48, 80],
  ["GameObject", 47, 150],
  ["Component", 48, 140],
  ["Services", 48, 103],
  ["Ads Mediation", 47, 172],
];

const rightMenus: [string, number, number][] = [
  ["Jobs", 446, 57],
  ["Tools", 49, 63],
  ["Window", 48, 97],
  ["Help", 47, 56],
];

export default function App() {
  return (
    <>
      <GlobalStyle />
      <Desktop>
        <BackWindow />
        <MenuBar>
          <MenuItem $ml={41} $w={30}>
            <AppleMark size={34} />
          </MenuItem>
          <MenuItem $ml={39} $w={68} $bold>Unity</MenuItem>
          {leftMenus.map(([t, ml, w]) => (
            <MenuItem key={t} $ml={ml} $w={w}>{t}</MenuItem>
          ))}
          {rightMenus.map(([t, ml, w]) => (
            <MenuItem key={t} $ml={ml} $w={w}>{t}</MenuItem>
          ))}
          <MenuItem $ml={57} $w={32}>
            <SiUnity size={33} />
          </MenuItem>
          <MenuItem $ml={40} $w={34}>
            <svg width="34" height="34" viewBox="0 0 34 34">
              <circle cx="17" cy="17" r="16" fill="none" stroke="#f2f2f2" strokeWidth="1.800" />
              <path d="M8.500 23A4.500 4.500 0 0 1 8.500 15.500A3 3 0 0 1 11 13A6.300 6.300 0 0 1 22.500 13.500A5 5 0 0 1 25.500 23Z" fill="#f2f2f2" />
            </svg>
          </MenuItem>
          <MenuItem $ml={40} $w={30}>
            <svg width="30" height="30" viewBox="0 0 30 30">
              <circle cx="15" cy="15" r="12.800" fill="none" stroke="#f2f2f2" strokeWidth="2.400" />
              <path d="M11.500 9.500L20.500 15L11.500 20.500Z" fill="#f2f2f2" />
            </svg>
          </MenuItem>
          <MenuItem $ml={34} $w={52}>
            <svg width="52" height="26" viewBox="0 0 52 26">
              <rect x="1" y="2" width="45" height="22" rx="7" fill="none" stroke="#a9a9ac" strokeWidth="2" />
              <rect x="4" y="5" width="26" height="16" rx="4" fill="#f2f2f2" />
              <path d="M48.500 9V17Q51.500 15.500 51.500 13Q51.500 10.500 48.500 9Z" fill="#a9a9ac" />
            </svg>
          </MenuItem>
          <MenuItem $ml={37} $w={34}>
            <svg width="34" height="26" viewBox="0 0 34 26" fill="none" stroke="#f2f2f2" strokeWidth="4">
              <path d="M1.500 9.500A22 22 0 0 1 32.500 9.500" />
              <path d="M7 15.500A14 14 0 0 1 27 15.500" />
              <path d="M17 25L11.500 19.500A8 8 0 0 1 22.500 19.500Z" fill="#f2f2f2" stroke="none" />
            </svg>
          </MenuItem>
          <MenuItem $ml={39} $w={27}>
            <svg width="27" height="27" viewBox="0 0 27 27" fill="none" stroke="#f2f2f2" strokeWidth="2.500">
              <circle cx="10.800" cy="10.800" r="9.300" />
              <path d="M17.500 17.500L25 25" strokeLinecap="round" strokeWidth="3" />
            </svg>
          </MenuItem>
          <MenuItem $ml={40} $w={28}>
            <svg width="27" height="28" viewBox="0 0 27 28">
              <rect x="1" y="1.500" width="25" height="11" rx="5.500" fill="none" stroke="#f2f2f2" strokeWidth="2" />
              <circle cx="7" cy="7" r="3.400" fill="#f2f2f2" />
              <rect x="0" y="15" width="27" height="13" rx="6.500" fill="#f2f2f2" />
              <circle cx="20" cy="21.500" r="3.600" fill="#58585c" />
            </svg>
          </MenuItem>
          <MenuItem $ml={36} $w={250}>Wed Apr 2  5:38 PM</MenuItem>
        </MenuBar>

        <Window>
          <TitleBar>
            <Light $dot />
            <Light />
            <Light />
            <ProjectIcon width="24" height="30" viewBox="0 0 24 30">
              <path d="M1 1H15L23 9V29H1Z" fill="#9a9a9a" />
              <path d="M12 9L19 13V21L12 25L5 21V13Z" fill="#222" />
              <path d="M12 17V24M12 17L6 13.500M12 17L18 13.500" stroke="#9a9a9a" strokeWidth="1.800" />
            </ProjectIcon>
            <WindowTitle>
              Shashwat main - CGCoursework - Windows, Mac, Linux - Unity 2022.3.57f1 &lt;Metal&gt; &lt;Rosetta&gt;
            </WindowTitle>
          </TitleBar>

          <MainBar>
            <BarButton $w={117} $first>
              <AccountIcon width="24" height="24" viewBox="0 0 24 24">
                <circle cx="12" cy="12" r="12" fill="#c4c4c4" />
                <circle cx="12" cy="7.500" r="4" fill="#2a2a2a" />
                <path d="M5 17Q6 13 12 13Q18 13 19 17Q16.500 20.500 12 20.500Q7.500 20.500 5 17Z" fill="#2a2a2a" />
              </AccountIcon>
              <Label $w={46}>SC</Label>
              <Caret />
            </BarButton>
            <BarButton $w={62} $ml={8}>
              <CloudShape w={28} color="#c8c8c8" />
            </BarButton>
            <BarButton $w={60} $ml={8} $h={40}>
              <svg width="28" height="24" viewBox="0 0 28 24" fill="none" stroke="#c8c8c8" strokeWidth="1.600">
                <circle cx="4.500" cy="5" r="3.200" />
                <circle cx="22" cy="5" r="3.200" />
                <circle cx="22" cy="19" r="3.200" />
                <path d="M8 5H18.500M10 5Q13 6 13.500 12Q14 18.500 18.500 19" />
              </svg>
            </BarButton>
            <BarButton $w={62} $ml={1107} $r={3}>
              <svg width="17" height="20" viewBox="0 0 17 20"><path d="M0 0L17 10L0 20Z" fill="#c8c8c8" /></svg>
            </BarButton>
            <BarButton $w={62} $ml={2} $r={0}>
              <svg width="16" height="20" viewBox="0 0 16 20"><path d="M0 0H6V20H0ZM10 0H16V20H10Z" fill="#c8c8c8" /></svg>
            </BarButton>
            <BarButton $w={61} $ml={2} $off $r={3}>
              <svg width="20" height="20" viewBox="0 0 20 20"><path d="M0 0L15 10L0 20ZM16.500 0H20V20H16.500Z" fill="#999" /></svg>
            </BarButton>
            <Spacer />
            <BarButton $w={62}>
              <svg width="26" height="26" viewBox="0 0 26 26" fill="none" stroke="#c8c8c8" strokeWidth="2.600">
                <path d="M4 7A11 11 0 1 1 3 16.500" />
                <path d="M2 2V8.500H8.500" />
                <path d="M13.500 7.500V14H18" />
              </svg>
            </BarButton>
            <BarButton $w={62} $ml={8}>
              <svg width="25" height="25" viewBox="0 0 25 25" fill="none" stroke="#c8c8c8" strokeWidth="2">
                <circle cx="9.500" cy="9.500" r="8.300" />
                <path d="M16 16L23.500 23.500" strokeWidth="3.600" />
              </svg>
            </BarButton>
            <BarButton $w={158} $ml={8} $first>
              <Label $w={130} $ls={-0.2}>Layers</Label>
              <Caret />
            </BarButton>
            <BarButton $w={158} $ml={8} $first>
              <Label $w={130}>Layout</Label>
              <Caret />
            </BarButton>
          </MainBar>

          <TabBar>
            <svg width="28" height="15" viewBox="0 0 28 15">
              <rect width="28" height="15" rx="6.500" fill="#c0c0c0" />
              <path d="M7.500 4V11M4 7.500H11" stroke="#282828" strokeWidth="1.800" />
              <circle cx="19" cy="9.500" r="2" fill="#282828" />
              <circle cx="23" cy="5.500" r="2" fill="#282828" />
            </svg>
            <Label style={{ marginLeft: 6 }} $ls={-0.4} $color="#d2d2d2">Game</Label>
            <Spacer />
            <svg width="6" height="22" viewBox="0 0 6 22" fill="#b8b8b8">
              <circle cx="3" cy="3" r="2.500" />
              <circle cx="3" cy="11" r="2.500" />
              <circle cx="3" cy="18.500" r="2.500" />
            </svg>
          </TabBar>

          <GameBar>
            <Cell $w={179} $pl={5} $pr={9}><Label $ls={-0.4}>Game</Label><Caret /></Cell>
            <Cell $w={172} $pl={18} $pr={9}><Label>Display 1</Label><Caret /></Cell>
            <Cell $w={320} $pl={6} $pr={9}><Label>Full HD (1920x1080)</Label><Caret /></Cell>
            <Cell $w={1079} $pl={12} style={{ justifyContent: "flex-start" }}>
              <Label $w={63}>Scale</Label>
              <Slider><Knob /></Slider>
              <Label>1.3x</Label>
            </Cell>
            <Cell $w={221} $pl={7} $pr={9}><Label>Play Focused</Label><Caret /></Cell>
            <Cell $w={52} $center><Beetle size={29} /></Cell>
            <Cell $w={597} />
            <Cell $w={52} $center>
              <svg width="25" height="19" viewBox="0 0 25 19" fill="none" stroke="#f0f0f0" strokeWidth="2">
                <path d="M0 4H5V15H0ZM6 4L13 0V19L6 15Z" fill="#f0f0f0" stroke="none" />
                <path d="M16 5.500Q18.500 9.500 16 13.500M19.500 2.500Q25 9.500 19.500 16.500" />
              </svg>
            </Cell>
            <Cell $w={53} $center>
              <svg width="28" height="20" viewBox="0 0 28 20" fill="none" stroke="#d0d0d0" strokeWidth="2">
                <rect x="1" y="1" width="26" height="18" />
                <path d="M1 7H27M1 13H27M7.500 1V7M14 1V7M20.500 1V7M10 7V13M16 7V13M22 7V13M5 7V13M7.500 13V19M20.500 13V19" />
              </svg>
            </Cell>
            <Cell $w={78} $pl={9}><Label $color="#b9b9b9">Stats</Label></Cell>
            <Cell $w={100} $pl={6}><Label $ls={-0.4}>Gizmos</Label></Cell>
            <Cell $w={30} $pl={8} $open><Caret /></Cell>
          </GameBar>

          <Stage>
            <GameView>
              <GameTitle>C<small>OOKIE</small> R<small>UN</small></GameTitle>
              <NameInput>Enter Name</NameInput>
              <ConnectButton>Connect</ConnectButton>

              <Note $x={100} $y={398} $w={500}>
                <NoteLine>InputField</NoteLine>
                <NoteLine>for the player</NoteLine>
                <NoteLine>name</NoteLine>
              </Note>
              <Note $x={1728} $y={221} $w={500}>
                <NoteLine>Game Name</NoteLine>
                <NoteLine>text field</NoteLine>
              </Note>
              <Note $x={806} $y={966} $w={1200}>
                <NoteLine>Connect button which calls</NoteLine>
                <NoteLine>
                  <span>the</span>
                  <Call>OnClickConnect()</Call>
                  <span>to the server</span>
                </NoteLine>
              </Note>
              <Arrows width="2940" height="1912" fill="none" stroke="#000" strokeWidth="5">
                <path d="M2048 632Q1860 666 1624 789" />
                <path d="M764 876.500Q950 859 1146 940" />
                <path d="M1555.500 1275Q1524 1190 1531 1122" />
                <g fill="#000" stroke="none">
                  <path d="M1607.500 799L1624.500 775.500L1637.500 798Z" />
                  <path d="M1162 948L1132.500 949.500L1144 925.500Z" />
                  <path d="M1535.500 1099L1518 1121.500L1544 1127Z" />
                </g>
              </Arrows>
            </GameView>
          </Stage>

          <StatusBar>
            <StatusCell $w={53}><Beetle slash size={29} /></StatusCell>
            <StatusCell $w={54}><DatabaseOff /></StatusCell>
            <StatusCell $w={52}><AutoOff /></StatusCell>
            <StatusCell $w={49}>
              <svg width="28" height="28" viewBox="0 0 28 28" fill="none" stroke="#b8b8b8" strokeWidth="2">
                <circle cx="14" cy="14" r="13" />
                <path d="M8.500 13.500L13 18L20 10" strokeWidth="2.400" />
              </svg>
            </StatusCell>
          </StatusBar>
        </Window>

        <DockBar>
          <Slot $running><Finder /></Slot>
          <Slot $running><Safari /></Slot>
          <Slot $running><Mail /><MailPoint /><Badge>21,966</Badge></Slot>
          <Slot $running><Maps /></Slot>
          <Slot><FaceTime /></Slot>
          <Slot><Reminders /></Slot>
          <Slot $running><Notes /></Slot>
          <Slot><Launchpad /></Slot>
          <Slot><Pages /></Slot>
          <Slot><Settings /></Slot>
          <Slot><AppStore /></Slot>
          <Divider />
          <Slot $running><WhatsApp /></Slot>
          <Slot $running><Spotify /></Slot>
          <Slot $running><Numbers /></Slot>
          <Slot $running><Chrome /></Slot>
          <Slot $running><GitHub /></Slot>
          <Slot $running><Preview /></Slot>
          <Slot $running><VSCode /></Slot>
          <Slot $running><Cube t={lightCube} /></Slot>
          <Slot $running><Cube t={darkCube} /></Slot>
          <Divider />
          <Slot><FinderThumb /><Mini><Finder /></Mini></Slot>
          <Slot><MapsThumb /><Mini><Maps /></Mini></Slot>
          <Slot><MailThumb /><Mini><Mail /></Mini></Slot>
          <Slot><NotesThumb /><Mini><Notes /></Mini></Slot>
          <Slot><SheetThumb /><Mini><Numbers /></Mini></Slot>
          <Slot><Trash /></Slot>
        </DockBar>

        <DimFrame />
      </Desktop>
    </>
  );
}
